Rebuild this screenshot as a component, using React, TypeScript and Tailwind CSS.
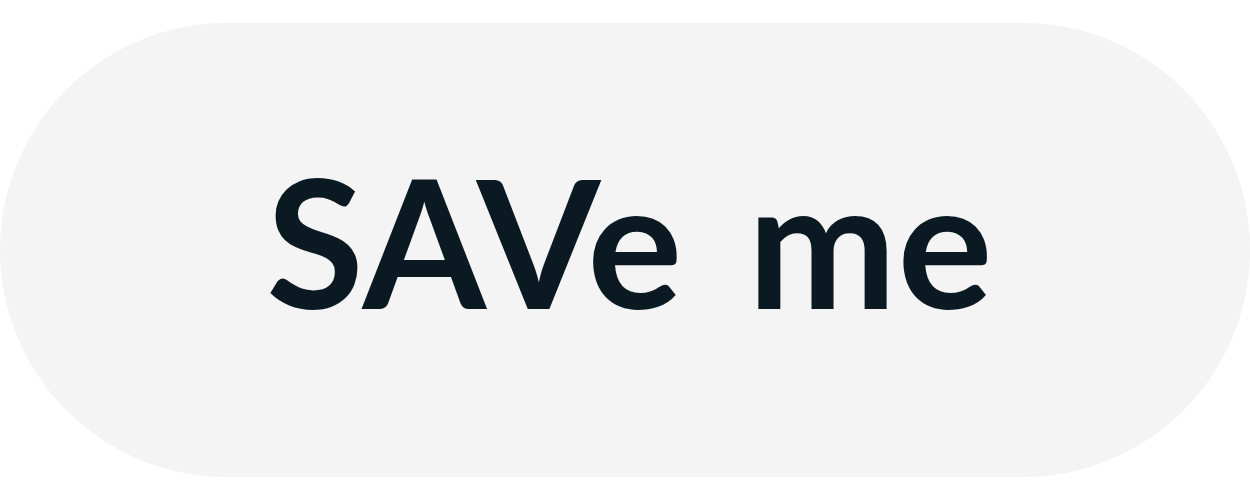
export default function App() {
  return (
    <div className="w-[1250px] h-[500px] bg-white pt-[23px]">
      <button className="w-[1250px] h-[454px] rounded-full bg-[#f4f4f4] flex items-center justify-center pl-[10px]">
        <span className="font-['Lato',sans-serif] font-bold text-[178px] leading-none text-[#0b1a22] tracking-[1px] [word-spacing:20px] -mt-[20px]">
          SAVe me
        </span>
      </button>
    </div>
  );
}
